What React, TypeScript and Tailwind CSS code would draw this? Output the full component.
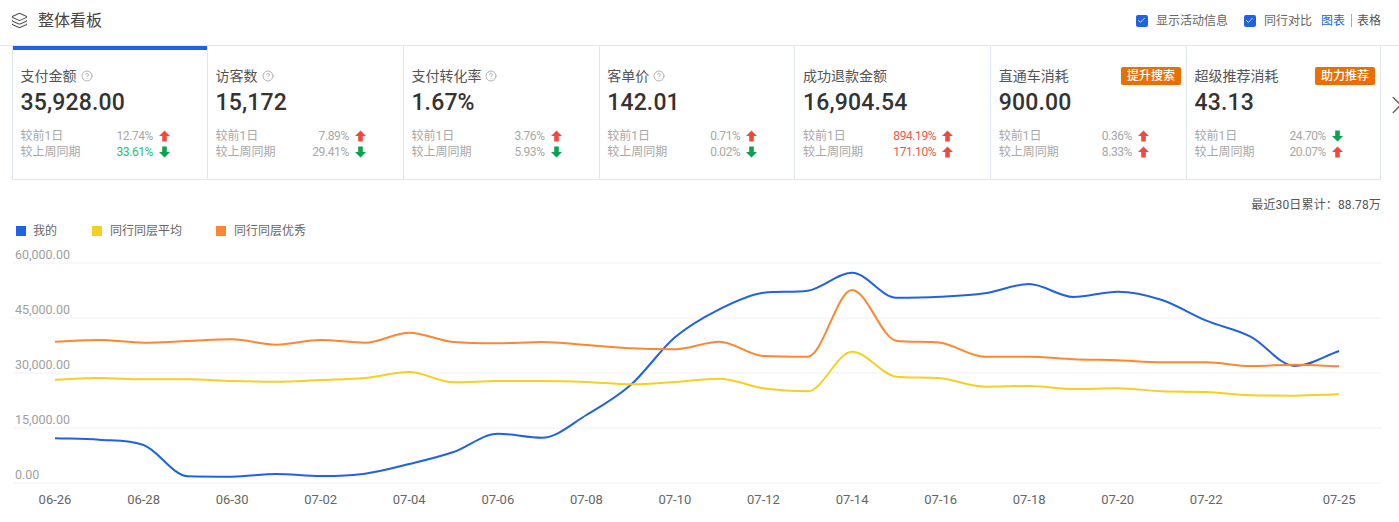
import { Check, ChevronRight, CircleHelp, Layers } from "lucide-react";

const metrics = [
  { label: "支付金额", value: "35,928.00", help: true, day: ["12.74%", "up", ""], week: ["33.61%", "down", "text-[#1fc07a]"] },
  { label: "访客数", value: "15,172", help: true, day: ["7.89%", "up", ""], week: ["29.41%", "down", ""] },
  { label: "支付转化率", value: "1.67%", help: true, day: ["3.76%", "up", ""], week: ["5.93%", "down", ""] },
  { label: "客单价", value: "142.01", help: true, day: ["0.71%", "up", ""], week: ["0.02%", "down", ""] },
  { label: "成功退款金额", value: "16,904.54", day: ["894.19%", "up", "text-[#f5544a]"], week: ["171.10%", "up", "text-[#f5544a]"] },
  { label: "直通车消耗", value: "900.00", badge: "提升搜索", day: ["0.36%", "up", ""], week: ["8.33%", "up", ""] },
  { label: "超级推荐消耗", value: "43.13", badge: "助力推荐", day: ["24.70%", "down", ""], week: ["20.07%", "up", ""] },
];

const blue = [438.3, 439.7, 445, 476.3, 476.7, 474, 476, 473.7, 464, 452, 433.7, 437.7, 415, 385, 337.3, 309.3, 292.7, 290.7, 272.7, 297.7, 296.7, 293.3, 284, 297, 291.7, 300, 320.7, 336.7, 366, 351];
const yellow = [379.7, 378, 379.3, 379.3, 381, 381.7, 380, 378, 372, 382.3, 381, 381, 382, 384.3, 382, 378.7, 388.3, 391.3, 351.7, 376.7, 378.3, 386.7, 386, 389, 388.3, 391.3, 392, 395.3, 395.7, 394.3];
const orange = [341.7, 340, 342.7, 341, 339.3, 344.7, 340, 342.7, 332.7, 342, 343.3, 342, 345, 348.3, 349.3, 341.7, 356, 356.7, 290, 340.7, 342.7, 356.7, 356.7, 359.3, 360.3, 362.3, 362.3, 366, 364.7, 366.3];

const gridLines = [
  { y: 263, label: "60,000.00" },
  { y: 318, label: "45,000.00" },
  { y: 373, label: "30,000.00" },
  { y: 428, label: "15,000.00" },
  { y: 483, label: "0.00" },
];

const dates = [
  [0, "06-26"], [2, "06-28"], [4, "06-30"], [6, "07-02"], [8, "07-04"], [10, "07-06"], [12, "07-08"], [14, "07-10"],
  [16, "07-12"], [18, "07-14"], [20, "07-16"], [22, "07-18"], [24, "07-20"], [26, "07-22"], [29, "07-25"],
] as const;

const xAt = (i: number) => 55 + 44.28 * i;

// monotone smoothing, so flat runs stay flat and peaks stay on the data points
const smoothPath = (ys: number[]) => {
  const last = ys.length - 1;
  const slopes = ys.map((y, i) => {
    if (i === 0) return ys[1] - y;
    if (i === last) return y - ys[i - 1];
    const a = y - ys[i - 1];
    const b = ys[i + 1] - y;
    if (a * b <= 0) return 0;
    return Math.sign(a) * Math.min(Math.abs(a + b) / 2, 3 * Math.abs(a), 3 * Math.abs(b));
  });
  let d = `M${xAt(0)} ${ys[0]}`;
  for (let i = 0; i < last; i++) {
    const c1 = ys[i] + slopes[i] / 3;
    const c2 = ys[i + 1] - slopes[i + 1] / 3;
    d += ` C${xAt(i) + 14.76} ${c1} ${xAt(i + 1) - 14.76} ${c2} ${xAt(i + 1)} ${ys[i + 1]}`;
  }
  return d;
};

const Arrow = ({ dir }: { dir: string }) => (
  <svg viewBox="0 0 11 12" className="h-3 w-[11px] shrink-0">
    {dir === "up" ? (
      <path d="M5.5 0.5L11 6H7.8V11.5H3.2V6H0Z" fill="#f5483b" />
    ) : (
      <path d="M3.2 0.5H7.8V6H11L5.5 11.5L0 6H3.2Z" fill="#0aa14f" />
    )}
  </svg>
);

const Compare = ({ label, data }: { label: string; data: string[] }) => (
  <div className="flex h-4 items-center pr-[37px] text-[12px] text-[#a8a8a8]">
    <span className="flex-1">{label}</span>
    <span className={`tracking-[-0.4px] ${data[2]}`}>{data[0]}</span>
    <span className="ml-[6px]">
      <Arrow dir={data[1]} />
    </span>
  </div>
);

const Toggle = ({ label }: { label: string }) => (
  <span className="flex items-center gap-2">
    <span className="flex size-3 items-center justify-center rounded-[2px] bg-[#2062e6]">
      <Check className="size-[9px] text-white" strokeWidth={2} />
    </span>
    <span>{label}</span>
  </span>
);

export default function App() {
  return (
    <div className="relative h-[522px] w-[1399px] overflow-hidden bg-white font-['Roboto','Noto_Sans_CJK_SC',sans-serif]">
      <header className="flex h-[46px] items-center justify-between border-b border-[#e3e8ee] pr-[18px] pb-1 pl-[11px]">
        <div className="flex items-center gap-[10px]">
          <Layers className="size-[17px] text-[#555]" strokeWidth={1.5} />
          <h1 className="text-[16px] font-normal text-[#444]">整体看板</h1>
        </div>
        <div className="flex items-center text-[12px] text-[#666]">
          <Toggle label="显示活动信息" />
          <span className="ml-4">
            <Toggle label="同行对比" />
          </span>
          <span className="ml-[9px] text-[#2062e6]">图表</span>
          <span className="mr-[5px] ml-[6px] h-[13px] w-px bg-[#aaa]" />
          <span className="text-[#555]">表格</span>
        </div>
      </header>

      <section className="relative mx-3 grid h-[134px] w-[1369px] grid-cols-[195px_repeat(5,195.8px)_1fr] border-x border-b border-[#e0e7ee]">
        <div className="absolute top-0 left-0 h-1 w-[194px] bg-[#2062e6]" />
        {metrics.map((m, i) => (
          <div key={m.label} className={`pt-5 pl-[7.6px] ${i < 6 ? "border-r border-[#e0e7ee]" : ""}`}>
            <div className="flex h-5 items-center justify-between pr-[5px]">
              <span className="flex items-center gap-1 text-[14px] text-[#555]">
                {m.label}
                {m.help && <CircleHelp className="size-3 text-[#999]" strokeWidth={1.5} />}
              </span>
              {m.badge && (
                <span className="flex h-[18px] w-[60px] items-center justify-center rounded-[2px] bg-[#e96f00] text-[12px] font-medium text-white">
                  {m.badge}
                </span>
              )}
            </div>
            <div className="mt-px h-8 text-[23px] leading-8 font-medium tracking-[0.15px] text-[#333]">{m.value}</div>
            <div className="mt-[9px]">
              <Compare label="较前1日" data={m.day} />
              <Compare label="较上周同期" data={m.week} />
            </div>
          </div>
        ))}
      </section>

      <ChevronRight className="absolute top-[90px] left-[1382px] size-[30px] text-[#666]" strokeWidth={1.2} />

      <div className="mt-4 pr-[18px] text-right text-[12px] leading-[18px] tracking-[0.15px] text-[#555]">最近30日累计：88.78万</div>

      <div className="mt-[9px] flex h-4 items-center pl-4 text-[12px] text-[#666]">
        <span className="mr-[7px] size-[10px] bg-[#2062e6]" />
        <span className="w-[59px]">我的</span>
        <span className="mr-2 size-[10px] bg-[#f5d020]" />
        <span className="w-[106px]">同行同层平均</span>
        <span className="mr-2 size-[10px] bg-[#ff8630]" />
        <span>同行同层优秀</span>
      </div>

      <svg viewBox="0 240 1399 282" className="mt-px block h-[282px] w-[1399px]">
        {gridLines.map((g) => (
          <g key={g.y}>
            <line x1="13" x2="1382" y1={g.y} y2={g.y} stroke="#f6f6fb" strokeWidth="1.5" />
            <text x="15" y={g.y - 4} className="fill-[#a0a0a0] text-[12.5px]">
              {g.label}
            </text>
          </g>
        ))}
        <path d={smoothPath(blue)} fill="none" stroke="#2062e6" strokeWidth="2" />
        <path d={smoothPath(yellow)} fill="none" stroke="#f5d020" strokeWidth="2" />
        <path d={smoothPath(orange)} fill="none" stroke="#ff8630" strokeWidth="2" />
        {dates.map(([i, label]) => (
          <text key={label} x={xAt(i)} y="504" textAnchor="middle" className="fill-[#666] text-[13px]">
            {label}
          </text>
        ))}
      </svg>
    </div>
  );
}
